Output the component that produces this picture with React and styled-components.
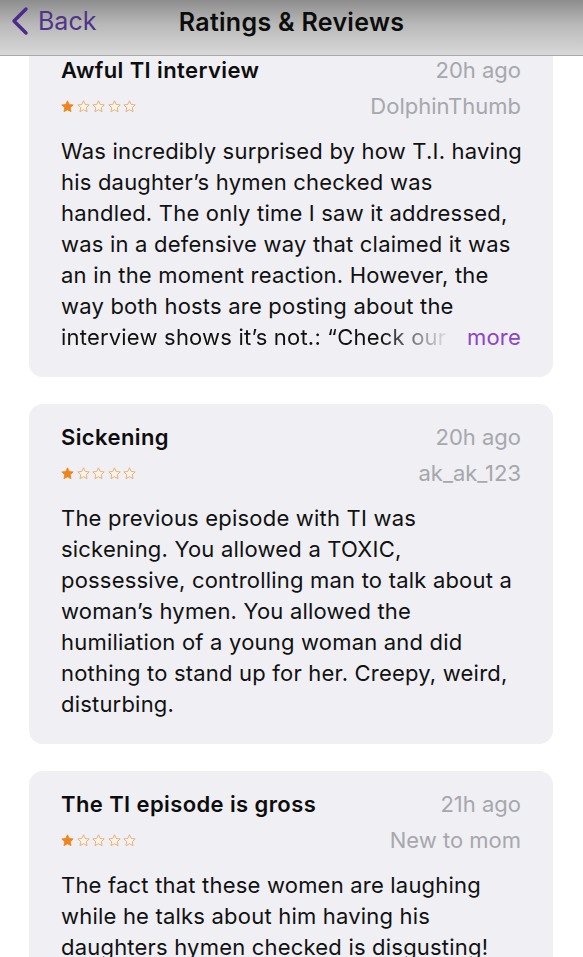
import React from 'react';
import styled, { createGlobalStyle } from 'styled-components';

const reviews = [
  {
    title: 'Awful TI interview',
    time: '20h ago',
    user: 'DolphinThumb',
    lines: [
      'Was incredibly surprised by how T.I. having',
      'his daughter’s hymen checked was',
      'handled.  The only time I saw it addressed,',
      'was in a defensive way that claimed it was',
      'an in the moment reaction.  However, the',
      'way both hosts are posting about the',
    ],
    cut: 'interview shows it’s not.: “Check our',
  },
  {
    title: 'Sickening',
    time: '20h ago',
    user: 'ak_ak_123',
    lines: [
      'The previous episode with TI was',
      'sickening. You allowed a TOXIC,',
      'possessive, controlling man to talk about a',
      'woman’s hymen. You allowed the',
      'humiliation of a young woman and did',
      'nothing to stand up for her. Creepy, weird,',
      'disturbing.',
    ],
  },
  {
    title: 'The TI episode is gross',
    time: '21h ago',
    user: 'New to mom',
    lines: [
      'The fact that these women are laughing',
      'while he talks about him having his',
      'daughters hymen checked is disgusting!',
      'He is a creep and so are they.',
    ],
  },
];

const Star = ({ filled }) => (
  <svg width="13" height="13" viewBox="0 0 24 24">
    <path
      d="M12 1.5l3.2 6.7 7.3.9-5.4 5.1 1.4 7.3L12 17.9l-6.5 3.6 1.4-7.3-5.4-5.1 7.3-.9z"
      fill={filled ? '#f0841a' : '#fdf3e6'}
      stroke={filled ? '#f0841a' : '#e0a468'}
      strokeWidth="1.5"
      strokeLinejoin="round"
    />
  </svg>
);

const App = () => (
  <>
    <GlobalStyle />
    <Screen>
      <NavBar>
        <BackButton>
          <svg width="20" height="30" viewBox="0 0 20 30">
            <path
              d="M16 3 L4 15 L16 27"
              fill="none"
              stroke="#4b2a8c"
              strokeWidth="3.4"
              strokeLinecap="round"
              strokeLinejoin="round"
            />
          </svg>
          Back
        </BackButton>
        <NavTitle>Ratings &amp; Reviews</NavTitle>
      </NavBar>
      <Viewport>
        <List>
          {reviews.map(r => (
            <Card key={r.title}>
              <HeadRow>
                <Title>{r.title}</Title>
                <Meta>{r.time}</Meta>
              </HeadRow>
              <SubRow>
                <Stars>
                  {[0, 1, 2, 3, 4].map(i => (
                    <Star key={i} filled={i === 0} />
                  ))}
                </Stars>
                <Meta>{r.user}</Meta>
              </SubRow>
              <Body>
                {r.lines.map(l => (
                  <Line key={l}>{l}</Line>
                ))}
                {r.cut && (
                  <CutRow>
                    <CutText>{r.cut}</CutText>
                    <More>more</More>
                  </CutRow>
                )}
              </Body>
            </Card>
          ))}
        </List>
      </Viewport>
    </Screen>
  </>
);

export default App;

const GlobalStyle = createGlobalStyle`
  html, body {
    margin: 0;
    padding: 0;
    background: #ffffff;
  }
  body {
    font-family: Inter, Roboto, "Liberation Sans", sans-serif;
    -webkit-font-smoothing: antialiased;
  }
`;

const Screen = styled.div`
  width: 583px;
  height: 957px;
  overflow: hidden;
  display: flex;
  flex-direction: column;
  background: #fff;
`;

const NavBar = styled.header`
  flex: 0 0 56px;
  height: 56px;
  box-sizing: border-box;
  display: flex;
  align-items: center;
  justify-content: center;
  position: relative;
  background: linear-gradient(#8d8d8d 0%, #b9b9b9 45%, #d8d8d8 100%);
  border-bottom: 1px solid #a9a9a9;
  z-index: 2;
`;

const BackButton = styled.div`
  position: absolute;
  left: 10px;
  top: 6px;
  display: flex;
  align-items: center;
  gap: 8px;
  color: #4f3489;
  font-size: 25px;
  line-height: 30px;
`;

const NavTitle = styled.h1`
  margin: 0 0 12px;
  font-size: 25px;
  font-weight: 600;
  letter-spacing: 0.3px;
  color: #0c0c0c;
`;

const Viewport = styled.div`
  flex: 1;
  overflow: hidden;
`;

const List = styled.div`
  margin-top: -19px;
  padding: 0 30px 0 29px;
  display: flex;
  flex-direction: column;
  gap: 27px;
`;

const Card = styled.article`
  background: #efeff4;
  border-radius: 14px;
  padding: 19px 32px 23px;
  height: 340px;
  box-sizing: border-box;
`;

const HeadRow = styled.div`
  display: flex;
  justify-content: space-between;
  align-items: center;
  height: 28px;
`;

const SubRow = styled(HeadRow)`
  margin-top: 8px;
`;

const Title = styled.div`
  font-size: 22px;
  font-weight: 600;
  letter-spacing: 0.4px;
  color: #0d0d0d;
`;

const Meta = styled.div`
  font-size: 22px;
  color: #a7a7ac;
`;

const Stars = styled.div`
  display: flex;
  gap: 2.5px;
`;

const Body = styled.div`
  margin-top: 16px;
  font-size: 22px;
  line-height: 31px;
  letter-spacing: 0.2px;
  color: #111;
`;

const Line = styled.div`
  white-space: nowrap;
`;

const CutRow = styled.div`
  display: flex;
  align-items: baseline;
  white-space: nowrap;
`;

const CutText = styled.span`
  flex: 1;
  overflow: hidden;
  -webkit-mask-image: linear-gradient(90deg, #000 82%, transparent 100%);
  mask-image: linear-gradient(90deg, #000 82%, transparent 100%);
`;

const More = styled.span`
  color: #8b45c6;
  margin-left: 16px;
`;
